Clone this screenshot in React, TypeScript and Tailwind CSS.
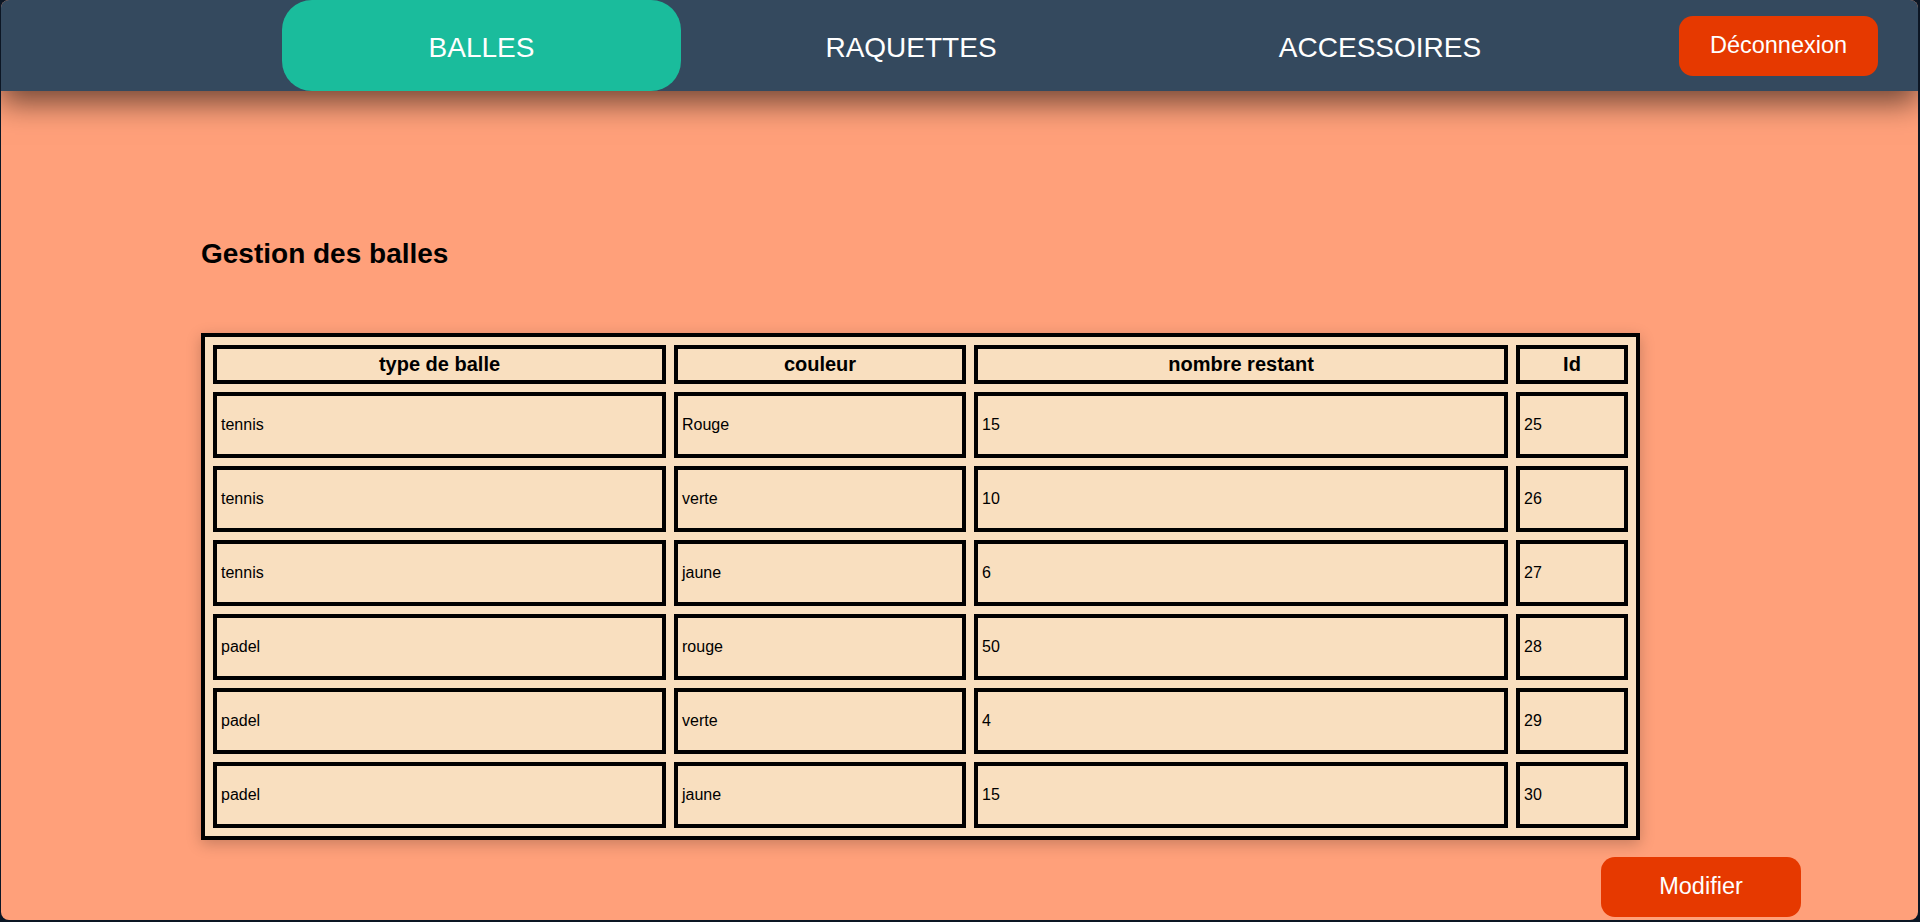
import React from 'react';

const rows = [
  { type: 'tennis', couleur: 'Rouge', nombre: 15, id: 25 },
  { type: 'tennis', couleur: 'verte', nombre: 10, id: 26 },
  { type: 'tennis', couleur: 'jaune', nombre: 6, id: 27 },
  { type: 'padel', couleur: 'rouge', nombre: 50, id: 28 },
  { type: 'padel', couleur: 'verte', nombre: 4, id: 29 },
  { type: 'padel', couleur: 'jaune', nombre: 15, id: 30 },
];

function NavBar() {
  return (
    <nav className="relative z-10 flex h-[91px] shrink-0 items-center bg-[#34495e] shadow-[0_12px_28px_rgba(0,0,0,0.55)]">
      <ul className="ml-[281px] flex h-full items-stretch text-[28px] text-white">
        <li className="flex w-[399px] items-center justify-center rounded-[30px] bg-[#1abc9c] pt-[4px]">BALLES</li>
        <li className="flex w-[460px] items-center justify-center pt-[4px]">RAQUETTES</li>
        <li className="flex w-[478px] items-center justify-center pt-[4px]">ACCESSOIRES</li>
      </ul>
      <button className="ml-auto mr-[40px] h-[60px] w-[199px] rounded-[14px] bg-[#e63900] text-[23.5px] text-white">
        Déconnexion
      </button>
    </nav>
  );
}

function BallsTable() {
  const th = 'h-[39px] border-4 border-black px-1 py-1 text-[20px] leading-[23px] font-bold';
  const td = 'h-[66px] border-4 border-black px-1 text-[16px] text-left';
  return (
    <table className="w-[1439px] table-fixed border-separate border-spacing-[8px] border-4 border-black bg-[#f9dfbf] shadow-[0_4px_14px_rgba(0,0,0,0.22)]">
      <thead>
        <tr>
          <th className={`${th} w-[453px]`}>type de balle</th>
          <th className={`${th} w-[292px]`}>couleur</th>
          <th className={`${th} w-[534px]`}>nombre restant</th>
          <th className={`${th} w-[112px]`}>Id</th>
        </tr>
      </thead>
      <tbody>
        {rows.map((r) => (
          <tr key={r.id}>
            <td className={td}>{r.type}</td>
            <td className={td}>{r.couleur}</td>
            <td className={td}>{r.nombre}</td>
            <td className={td}>{r.id}</td>
          </tr>
        ))}
      </tbody>
    </table>
  );
}

export default function App() {
  return (
    <div
      className="h-[922px] bg-[#0c1624] pl-px pr-[2px] pb-[2px] text-black"
      style={{ fontFamily: '"Liberation Sans", Arial, sans-serif' }}
    >
      <div className="flex h-full flex-col overflow-hidden rounded-[8px] bg-[#ffa07a]">
        <NavBar />
        <main className="flex flex-col pl-[200px] pt-[147px]">
          <h2 className="text-[28px] leading-[32px] font-bold">Gestion des balles</h2>
          <div className="mt-[63px]">
            <BallsTable />
          </div>
          <div className="mt-[17px] flex justify-end pr-[117px]">
            <button className="h-[60px] w-[200px] rounded-[14px] bg-[#e63900] text-[23.5px] text-white">
              Modifier
            </button>
          </div>
        </main>
      </div>
    </div>
  );
}
